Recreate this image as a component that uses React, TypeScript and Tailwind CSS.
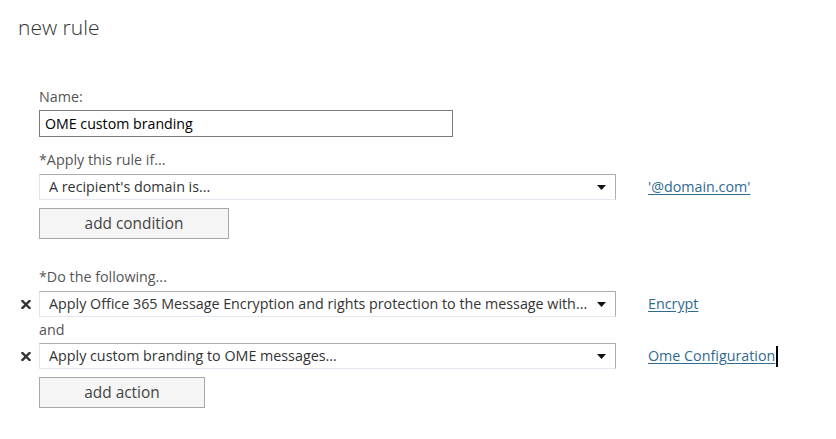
import { ReactNode } from 'react'

const font = { fontFamily: '"Open Sans", "Noto Sans", sans-serif' }

function Remove() {
  return (
    <svg width="10" height="9" viewBox="0 0 10 9" className="block">
      <path d="M1.5 1 L8.5 8 M8.5 1 L1.5 8" stroke="#333" strokeWidth="2.4" strokeLinecap="square" />
    </svg>
  )
}

function Select({ children }: { children: ReactNode }) {
  return (
    <div className="flex h-[26px] w-[577px] items-center border border-t-[#abadb3] border-r-[#abadb3] border-b-[#e3e9ef] border-l-[#e2e3ea] bg-white pl-[9px] pr-[9px]">
      <span className="flex-1 overflow-hidden whitespace-nowrap text-[14.3px] text-[#333]">{children}</span>
      <svg width="9" height="5" viewBox="0 0 9 5" className="ml-2 shrink-0">
        <path d="M0 0 H9 L4.5 5 Z" fill="#111" />
      </svg>
    </div>
  )
}

function Row({ removable, link, cursor, children }: { removable?: boolean; link: string; cursor?: boolean; children: ReactNode }) {
  return (
    <div className="flex items-center">
      <div className="flex w-[39px] justify-end pr-[8px]">{removable && <Remove />}</div>
      <Select>{children}</Select>
      <div className="ml-[32px] flex items-center">
        <a className="text-[14.3px] text-[#2f6a8f] underline underline-offset-2">{link}</a>
        {cursor && <span className="ml-[1px] inline-block h-[21px] w-[2px] bg-black" />}
      </div>
    </div>
  )
}

function Label({ children, className = '' }: { children: ReactNode; className?: string }) {
  return <div className={`pl-[39px] text-[14.3px] leading-[18px] text-[#555] ${className}`}>{children}</div>
}

function Button({ children, width }: { children: ReactNode; width: string }) {
  return (
    <div className="pl-[39px]">
      <button className={`${width} h-[31px] border border-[#a7a7a7] bg-[#f5f5f5] text-[15.4px] text-[#444]`}>{children}</button>
    </div>
  )
}

export default function App() {
  return (
    <div className="h-[439px] w-[836px] bg-white" style={font}>
      <h1 className="ml-[18px] pt-[12px] text-[21px] font-light leading-[30px] text-[#333]">new rule</h1>

      <Label className="mt-[46px] mb-[4px]">Name:</Label>
      <div className="pl-[39px]">
        <input
          readOnly
          value="OME custom branding"
          className="h-[27px] w-[414px] border border-[#7a7a7a] px-[5px] text-[14.2px] text-black outline-none"
          style={font}
        />
      </div>

      <Label className="mt-[14px] mb-[5px]">*Apply this rule if...</Label>
      <Row link="'@domain.com'">A recipient's domain is...</Row>
      <div className="mt-[8px]">
        <Button width="w-[190px]">add condition</Button>
      </div>

      <Label className="mt-[29px] mb-[5px]">*Do the following...</Label>
      <Row removable link="Encrypt">
        Apply Office 365 Message Encryption and rights protection to the message with...
      </Row>
      <Label className="mt-[4px] mb-[4px]">and</Label>
      <Row removable link="Ome Configuration" cursor>
        Apply custom branding to OME messages...
      </Row>
      <div className="mt-[8px]">
        <Button width="w-[166px]">add action</Button>
      </div>
    </div>
  )
}
